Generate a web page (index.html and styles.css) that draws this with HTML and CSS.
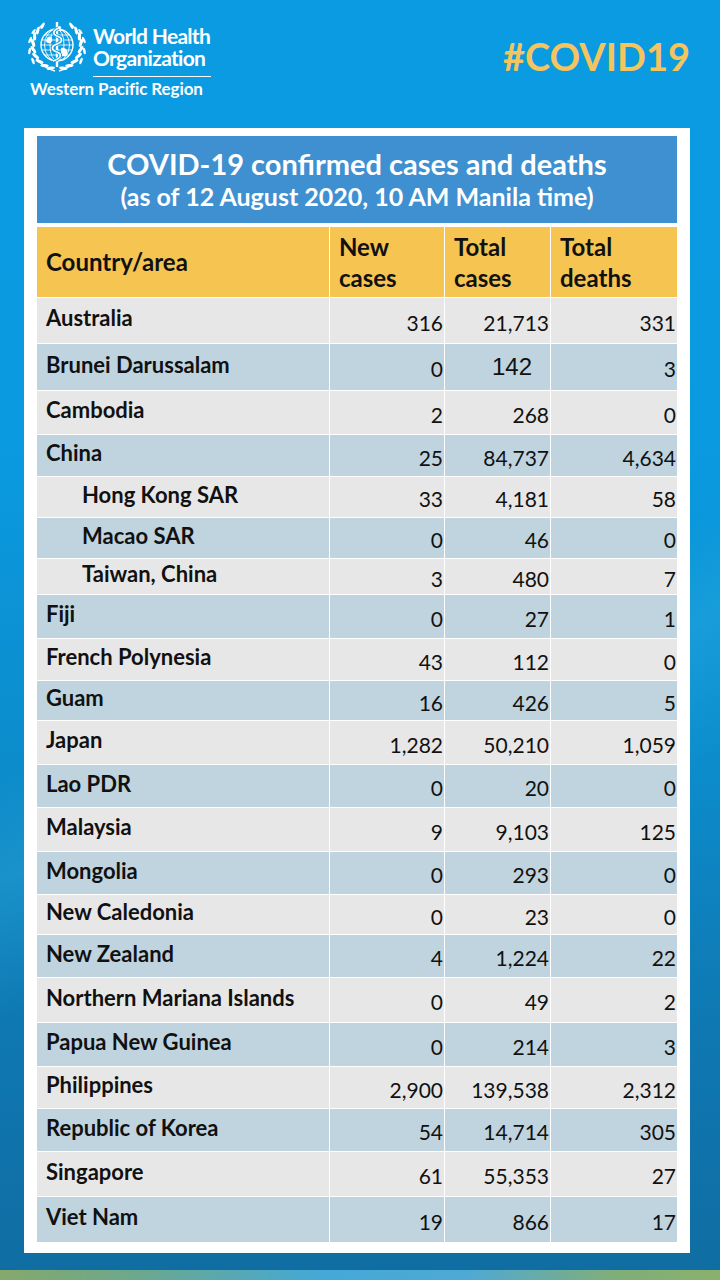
FILE: index.html
```html
<!DOCTYPE html>
<html lang="en">
<head>
<meta charset="utf-8">
<title>COVID-19 confirmed cases and deaths - WHO Western Pacific</title>
<link rel="stylesheet" href="styles.css">
</head>
<body>
<div class="page">
  <header class="top">
    <div class="who">
      <svg class="emblem" viewBox="0 0 64 56" width="64" height="56" aria-hidden="true">
        <defs>
          <g id="branch">
            <path d="M30 51 C18 48 8 38 8 25 C8 16 12 9 18 4" fill="none" stroke="#fff" stroke-width="1.3"/>
            <ellipse cx="25.8" cy="48.2" rx="4.2" ry="1.6" transform="rotate(170 25.8 48.2)" fill="#fff"/>
            <ellipse cx="19.6" cy="45.6" rx="4.2" ry="1.6" transform="rotate(186 19.6 45.6)" fill="#fff"/>
            <ellipse cx="14.5" cy="41.4" rx="4.2" ry="1.6" transform="rotate(202 14.5 41.4)" fill="#fff"/>
            <ellipse cx="10.6" cy="35.9" rx="4.2" ry="1.6" transform="rotate(218 10.6 35.9)" fill="#fff"/>
            <ellipse cx="8.4" cy="29.6" rx="4.2" ry="1.6" transform="rotate(234 8.4 29.6)" fill="#fff"/>
            <ellipse cx="8.1" cy="22.9" rx="4.2" ry="1.6" transform="rotate(250 8.1 22.9)" fill="#fff"/>
            <ellipse cx="9.6" cy="16.4" rx="4.2" ry="1.6" transform="rotate(266 9.6 16.4)" fill="#fff"/>
            <ellipse cx="12.8" cy="10.6" rx="4.0" ry="1.5" transform="rotate(282 12.8 10.6)" fill="#fff"/>
            <ellipse cx="17.6" cy="5.8" rx="3.6" ry="1.4" transform="rotate(298 17.6 5.8)" fill="#fff"/>
            <ellipse cx="4.6" cy="31" rx="3.4" ry="1.3" transform="rotate(280 4.6 31)" fill="#fff"/>
            <ellipse cx="5.2" cy="20" rx="3.4" ry="1.3" transform="rotate(295 5.2 20)" fill="#fff"/>
            <ellipse cx="8" cy="41" rx="3.4" ry="1.3" transform="rotate(250 8 41)" fill="#fff"/>
            <ellipse cx="8.6" cy="11.5" rx="3" ry="1.2" transform="rotate(310 8.6 11.5)" fill="#fff"/>
          </g>
        </defs>
        <use href="#branch"/>
        <use href="#branch" transform="translate(64 0) scale(-1 1)"/>
        <circle cx="32" cy="25" r="16" fill="none" stroke="#fff" stroke-width="1.4"/>
        <ellipse cx="32" cy="25" rx="7" ry="16" fill="none" stroke="#fff" stroke-width="0.9"/>
        <ellipse cx="32" cy="25" rx="12.5" ry="16" fill="none" stroke="#fff" stroke-width="0.9"/>
        <path d="M16.8 20 H47.2 M16 25 H48 M16.8 30 H47.2 M19.5 15 H44.5 M19.5 35 H44.5 M24 10.5 H40 M24 39.5 H40" stroke="#fff" stroke-width="0.8"/>
        <path d="M36 28 C40 27 44 30 42 35 C40 38 36 36 36 32 Z" fill="#fff"/>
        <path d="M22 18 C25 15 28 17 27 21 C26 24 22 24 21 21 Z" fill="#fff"/>
        <line x1="32" y1="2" x2="32" y2="47" stroke="#fff" stroke-width="2.4"/>
        <path d="M28 41 C37 38 37 34 32 32 C26 30 26 26 32 24 C38 22 38 18 32 16 C27 14 28 10 34 8" fill="none" stroke="#0a9be2" stroke-width="3.4"/>
        <path d="M28 41 C37 38 37 34 32 32 C26 30 26 26 32 24 C38 22 38 18 32 16 C27 14 28 10 34 8" fill="none" stroke="#fff" stroke-width="1.7"/>
        <circle cx="34.5" cy="7.6" r="1.6" fill="#fff"/>
      </svg>
      <div class="who-name">World Health Organization</div>
      <div class="who-region">Western Pacific Region</div>
    </div>
    <div class="tag">#COVID19</div>
  </header>

  <main class="panel">
    <div class="title">
      <div class="title-main">COVID-19 confirmed cases and deaths</div>
      <div class="title-sub">(as of 12 August 2020, 10 AM Manila time)</div>
    </div>
    <div class="table">
      <div class="row head">
        <div class="cell name">Country/area</div>
        <div class="cell col">New<br>cases</div>
        <div class="cell col">Total<br>cases</div>
        <div class="cell col">Total<br>deaths</div>
      </div>
      <div class="row gray"><div class="cell name">Australia</div><div class="cell num">316</div><div class="cell num">21,713</div><div class="cell num">331</div></div>
      <div class="row blue"><div class="cell name">Brunei Darussalam</div><div class="cell num">0</div><div class="cell num alt">142</div><div class="cell num">3</div></div>
      <div class="row gray"><div class="cell name">Cambodia</div><div class="cell num">2</div><div class="cell num">268</div><div class="cell num">0</div></div>
      <div class="row blue"><div class="cell name">China</div><div class="cell num">25</div><div class="cell num">84,737</div><div class="cell num">4,634</div></div>
      <div class="row gray"><div class="cell name sub">Hong Kong SAR</div><div class="cell num">33</div><div class="cell num">4,181</div><div class="cell num">58</div></div>
      <div class="row blue"><div class="cell name sub">Macao SAR</div><div class="cell num">0</div><div class="cell num">46</div><div class="cell num">0</div></div>
      <div class="row gray"><div class="cell name sub">Taiwan, China</div><div class="cell num">3</div><div class="cell num">480</div><div class="cell num">7</div></div>
      <div class="row blue"><div class="cell name">Fiji</div><div class="cell num">0</div><div class="cell num">27</div><div class="cell num">1</div></div>
      <div class="row gray"><div class="cell name">French Polynesia</div><div class="cell num">43</div><div class="cell num">112</div><div class="cell num">0</div></div>
      <div class="row blue"><div class="cell name">Guam</div><div class="cell num">16</div><div class="cell num">426</div><div class="cell num">5</div></div>
      <div class="row gray"><div class="cell name">Japan</div><div class="cell num">1,282</div><div class="cell num">50,210</div><div class="cell num">1,059</div></div>
      <div class="row blue"><div class="cell name">Lao PDR</div><div class="cell num">0</div><div class="cell num">20</div><div class="cell num">0</div></div>
      <div class="row gray"><div class="cell name">Malaysia</div><div class="cell num">9</div><div class="cell num">9,103</div><div class="cell num">125</div></div>
      <div class="row blue"><div class="cell name">Mongolia</div><div class="cell num">0</div><div class="cell num">293</div><div class="cell num">0</div></div>
      <div class="row gray"><div class="cell name">New Caledonia</div><div class="cell num">0</div><div class="cell num">23</div><div class="cell num">0</div></div>
      <div class="row blue"><div class="cell name">New Zealand</div><div class="cell num">4</div><div class="cell num">1,224</div><div class="cell num">22</div></div>
      <div class="row gray"><div class="cell name">Northern Mariana Islands</div><div class="cell num">0</div><div class="cell num">49</div><div class="cell num">2</div></div>
      <div class="row blue"><div class="cell name">Papua New Guinea</div><div class="cell num">0</div><div class="cell num">214</div><div class="cell num">3</div></div>
      <div class="row gray"><div class="cell name">Philippines</div><div class="cell num">2,900</div><div class="cell num">139,538</div><div class="cell num">2,312</div></div>
      <div class="row blue"><div class="cell name">Republic of Korea</div><div class="cell num">54</div><div class="cell num">14,714</div><div class="cell num">305</div></div>
      <div class="row gray"><div class="cell name">Singapore</div><div class="cell num">61</div><div class="cell num">55,353</div><div class="cell num">27</div></div>
      <div class="row blue"><div class="cell name">Viet Nam</div><div class="cell num">19</div><div class="cell num">866</div><div class="cell num">17</div></div>
    </div>
  </main>
  <div class="spacer"></div>
  <div class="strip"></div>
</div>
</body>
</html>
```

FILE: styles.css
```css
* { box-sizing: border-box; }

html, body {
  margin: 0;
  padding: 0;
}

body {
  width: 720px;
  height: 1280px;
  overflow: hidden;
  font-family: Lato, "Open Sans", sans-serif;
}

.page {
  width: 720px;
  height: 1280px;
  display: flex;
  flex-direction: column;
  background:
    linear-gradient(160deg, rgba(255,255,255,0) 0%, rgba(255,255,255,0) 50%, rgba(70,195,235,0.22) 57%, rgba(255,255,255,0) 66%),
    linear-gradient(180deg, #0a9be2 0%, #0a9ae0 35%, #0c8ccb 60%, #0f78b2 80%, #106da2 100%);
}

/* ---------- header ---------- */
.top {
  height: 128px;
  display: flex;
  justify-content: space-between;
  align-items: flex-start;
  padding: 0 30px 0 25px;
}

.who {
  display: grid;
  grid-template-columns: 64px auto;
  grid-template-rows: auto auto;
  column-gap: 4px;
  padding-top: 20px;
  color: #fff;
}

.emblem {
  grid-row: 1;
  grid-column: 1;
  display: block;
}

.who-name {
  grid-row: 1;
  grid-column: 2;
  width: 118px;
  height: 57px;
  padding-top: 5px;
  border-bottom: 1.5px solid #fff;
  font-weight: 700;
  font-size: 21px;
  line-height: 22px;
  letter-spacing: -0.7px;
}

.who-region {
  grid-row: 2;
  grid-column: 1 / 3;
  font-weight: 700;
  font-size: 17px;
  line-height: 20px;
  letter-spacing: -0.1px;
  padding-left: 5px;
  padding-top: 2px;
  white-space: nowrap;
}

.tag {
  margin-top: 33px;
  font-weight: 700;
  font-size: 38px;
  line-height: 46px;
  color: #f4c45f;
}

/* ---------- panel ---------- */
.panel {
  margin: 0 30px 0 24px;
  background: #fff;
  padding: 8px 13px 11px 13px;
}

.title {
  height: 87px;
  margin-bottom: 4px;
  background: #3e90d1;
  color: #fff;
  font-weight: 700;
  text-align: center;
  display: flex;
  flex-direction: column;
  justify-content: center;
  padding-bottom: 2px;
}

.title-main {
  font-size: 29px;
  line-height: 35px;
}

.title-sub {
  font-size: 25px;
  line-height: 31px;
}

.table {
  display: grid;
  grid-template-columns: 292px 114px 105px 126px;
  grid-template-rows: 70px 45px 46px 43px 41px 40px 40px 35px 43px 41px 39px 43px 42px 43px 42px 39px 42px 44px 43px 41px 42px 44px 45px;
  gap: 1px;
  background: #fff;
}

.row { display: contents; }

.cell {
  display: flex;
  align-items: center;
  color: #111;
}

.head .cell {
  background: #f5c451;
  font-weight: 700;
  font-size: 24px;
  line-height: 31px;
  padding-left: 9px;
}

.head .name { padding-bottom: 2px; }

.gray .cell { background: #e8e7e7; }
.blue .cell { background: #bfd4df; }

.name {
  font-weight: 700;
  font-size: 22px;
  padding-left: 9px;
  padding-bottom: 6px;
  white-space: nowrap;
}

.name.sub { padding-left: 45px; }

.num {
  justify-content: flex-end;
  font-size: 21px;
  padding-right: 1px;
  padding-top: 3px;
}

.num.alt {
  font-family: "Liberation Sans", Arial, sans-serif;
  font-size: 24px;
  padding-right: 18px;
  padding-top: 0;
}

/* ---------- bottom ---------- */
.spacer { flex: 1; }

.strip {
  height: 10px;
  background: linear-gradient(90deg, #86a86c 0%, #6aa890 20%, #44a8d8 45%, #4fa9d4 65%, #7fae7a 85%, #8ab06c 100%);
}
```
